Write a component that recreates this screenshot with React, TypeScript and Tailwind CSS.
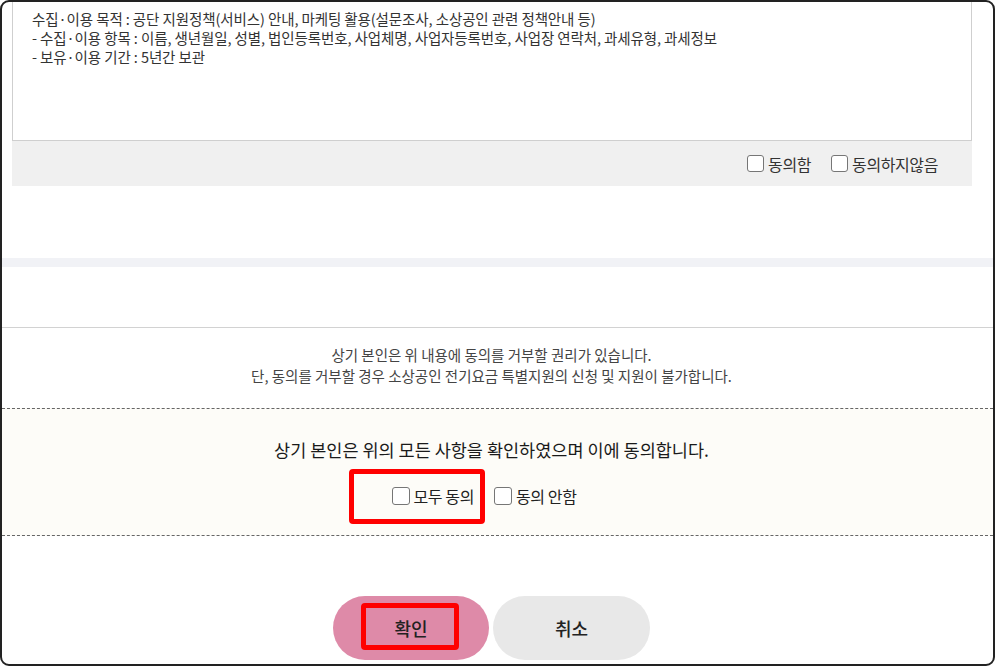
const font = { fontFamily: '"Noto Sans CJK KR", "Noto Sans", sans-serif' };

const Check = ({ label, size = "sm" }: { label: string; size?: "sm" | "md" }) => (
  <label className="flex items-center gap-[4px] cursor-pointer">
    <input
      type="checkbox"
      className={
        size === "md"
          ? "appearance-none w-[18px] h-[18px] border border-[#767676] rounded-[3px] bg-white"
          : "appearance-none w-[17px] h-[17px] border border-[#767676] rounded-[3px] bg-white"
      }
    />
    <span
      className={
        size === "md"
          ? "text-[16px] text-[#222] tracking-[-0.4px]"
          : "text-[16px] text-[#333] tracking-[-0.4px]"
      }
    >
      {label}
    </span>
  </label>
);

export default function App() {
  return (
    <div
      style={font}
      className="w-[995px] h-[666px] border-2 border-[#222] rounded-[9px] overflow-hidden bg-white flex flex-col"
    >
      {/* terms box */}
      <div className="ml-[10px] w-[960px]">
        <div className="h-[139px] border-x border-b border-[#cfcfcf] pl-[19px] pt-[7px] text-[14.5px] leading-[19px] text-[#333] tracking-[-0.1px]">
          <p>수집·이용 목적 : 공단 지원정책(서비스) 안내, 마케팅 활용(설문조사, 소상공인 관련 정책안내 등)</p>
          <p>- 수집·이용 항목 : 이름, 생년월일, 성별, 법인등록번호, 사업체명, 사업자등록번호, 사업장 연락처, 과세유형, 과세정보</p>
          <p>- 보유·이용 기간 : 5년간 보관</p>
        </div>
        <div className="h-[45px] bg-[#f0f0f0] flex items-center justify-end gap-[20px] pr-[34px]">
          <Check label="동의함" />
          <Check label="동의하지않음" />
        </div>
      </div>

      <div className="h-[72px] shrink-0" />
      <div className="h-[9px] shrink-0 bg-[#f1f2f6]" />
      <div className="h-[60px] shrink-0" />

      {/* notice */}
      <div className="border-t border-[#d2d2d2] pt-[16px] pb-[22px] pr-[12px] text-center text-[14.5px] leading-[21px] text-[#444] tracking-[0px]">
        <p>상기 본인은 위 내용에 동의를 거부할 권리가 있습니다.</p>
        <p>단, 동의를 거부할 경우 소상공인 전기요금 특별지원의 신청 및 지원이 불가합니다.</p>
      </div>

      {/* agree all */}
      <div className="h-[128px] shrink-0 border-y border-dashed border-[#666] bg-[#fdfcf8] pr-[12px] flex flex-col items-center pt-[29px]">
        <p className="text-[17.5px] leading-[24px] text-[#1a1a1a]">
          상기 본인은 위의 모든 사항을 확인하였으며 이에 동의합니다.
        </p>
        <div className="mt-[22px] flex items-center gap-[20px] pr-[15px]">
          <div className="relative">
            <Check label="모두 동의" size="md" />
            <span className="absolute -left-[43px] -right-[11px] -top-[15px] -bottom-[16px] border-[5px] border-[#ff0000] rounded-[4px] pointer-events-none" />
          </div>
          <Check label="동의 안함" size="md" />
        </div>
      </div>

      {/* buttons */}
      <div className="mt-[60px] pr-[12px] flex justify-center gap-[4px]">
        <button className="relative w-[156px] h-[64px] rounded-full bg-[#de8aa8] text-[18px] font-medium text-[#222]">
          확인
          <span className="absolute left-[28px] right-[30px] top-[7px] bottom-[10px] border-[5px] border-[#ff0000] rounded-[4px] pointer-events-none" />
        </button>
        <button className="w-[157px] h-[64px] rounded-full bg-[#e8e8e8] text-[18px] font-medium text-[#222]">
          취소
        </button>
      </div>
    </div>
  );
}
